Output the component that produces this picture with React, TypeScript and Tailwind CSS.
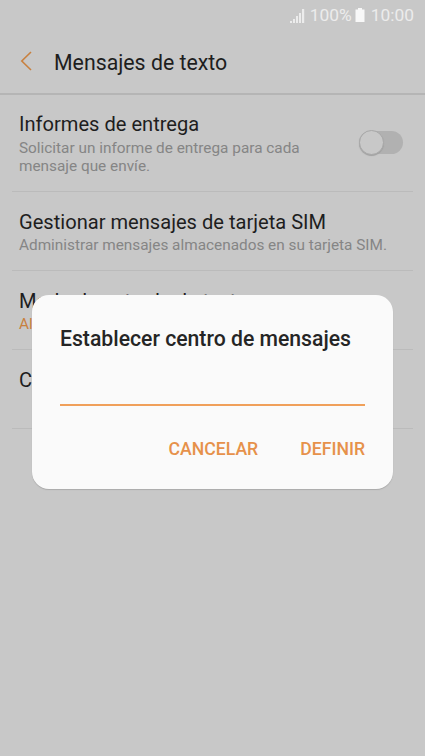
export default function App() {
  return (
    <div className="relative h-[756px] w-[425px] overflow-hidden bg-[#c8c8c8] font-[Roboto,sans-serif] text-[#1e1e1e]">
      <header className="flex h-[31px] items-center justify-end pr-[11px] text-[17.4px] text-[#ececec]">
        <svg className="mr-[5px]" width="15" height="14" viewBox="0 0 15 14" fill="currentColor"><path d="M0 12h2v2H0zM3 10h2v4H3zM6 7h2v7H6zM9 4h2v10H9zM12 0h2.200v14H12z" /></svg>
        <span>100%</span>
        <svg className="-mt-px mr-[6px] ml-[3px] text-[#f8f8f8]" width="10" height="14" viewBox="0 0 10 14" fill="currentColor"><path d="M3 0h4v1.500h2.500V14H.5V1.500H3z" /></svg>
        <span>10:00</span>
      </header>
      <div className="flex h-[64px] items-center border-b-2 border-[#b5b5b5] pl-[20px]">
        <svg className="-mt-[3px]" width="12" height="20" viewBox="0 0 12 20" fill="none" stroke="#c8803f" strokeWidth="1.6"><path d="M11 1L1.800 10l9.200 9" /></svg>
        <h1 className="mt-px ml-[22px] text-[21.3px]">Mensajes de texto</h1>
      </div>
      <main className="px-[12px]">
        <section className="flex h-[97px] justify-between border-b border-[#bbb] px-[7px] pt-[16px]">
          <div>
            <h2 className="text-[20.1px] leading-[27px]">Informes de entrega</h2>
            <p className="mt-px text-[15.35px] leading-[18px] text-[#858585]">Solicitar un informe de entrega para cada<br />mensaje que envíe.</p>
          </div>
          <div className="mt-[20px] mr-[3px] h-[23px] w-[44px] rounded-full bg-[#b1b1b1]"><div className="-mt-px h-[25px] w-[25px] rounded-full border border-[#a8a8a8] bg-[#c8c8c8] shadow-[0_1px_1px_#a0a0a0]" /></div>
        </section>
        <section className="h-[79px] border-b border-[#bbb] px-[7px] pt-[17px]">
          <h2 className="text-[20.1px] leading-[27px]">Gestionar mensajes de tarjeta SIM</h2>
          <p className="text-[15.35px] leading-[18px] text-[#858585]">Administrar mensajes almacenados en su tarjeta SIM.</p>
        </section>
        <section className="h-[79px] border-b border-[#bbb] px-[7px] pt-[17px]">
          <h2 className="text-[20.1px] leading-[27px]">Modo de entrada de texto</h2>
          <p className="text-[15.35px] leading-[18px] text-[#c8803f]">Alfabeto GSM</p>
        </section>
        <section className="h-[79px] border-b border-[#bbb] px-[7px] pt-[17px]">
          <h2 className="text-[20.1px] leading-[27px]">Centro de mensajes</h2>
        </section>
      </main>
      <div className="absolute top-[295px] left-[32px] h-[194px] w-[361px] rounded-[17px] bg-[#fafafa] px-[28px] pt-[30px] shadow-[0_1px_1px_#aaa]">
        <h2 className="text-[21.2px] leading-[28px] font-medium whitespace-nowrap text-[#252525]">Establecer centro de mensajes</h2>
        <div className="h-[53px] border-b-2 border-[#f0a05a]" />
        <div className="mt-[31px] flex justify-end gap-[42px] text-[17.65px] leading-[24px] font-medium text-[#e6914a]"><button>CANCELAR</button><button>DEFINIR</button></div>
      </div>
    </div>
  );
}
